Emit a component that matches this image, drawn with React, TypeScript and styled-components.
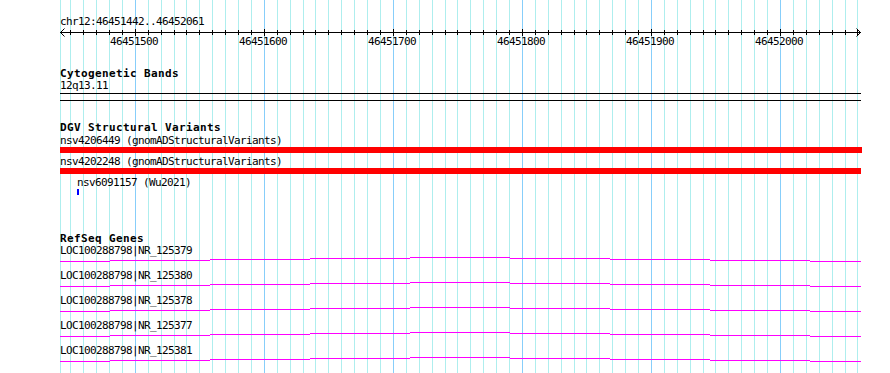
import React from 'react'
import styled, { createGlobalStyle } from 'styled-components'

// region shown in the panel
const START = 46451442
const END = 46452061
const LEFT = 60
const WIDTH = 800
const PX_PER_BP = WIDTH / (END - START + 1)

const toX = (bp: number) => Math.round(LEFT + (bp - START) * PX_PER_BP)

const gridPositions: { x: number; major: boolean; bp: number }[] = []
for (let bp = Math.ceil(START / 10) * 10; bp <= END; bp += 10) {
  gridPositions.push({ x: toX(bp), major: bp % 100 === 0, bp })
}

const variants = [
  { name: 'nsv4206449', source: 'gnomADStructuralVariants', offset: 0, width: 802, color: '#ff0000' },
  { name: 'nsv4202248', source: 'gnomADStructuralVariants', offset: 0, width: 801, color: '#ff0000' },
  { name: 'nsv6091157', source: 'Wu2021', offset: 17, width: 2, color: '#0000ff' },
]

const genes = ['NR_125379', 'NR_125380', 'NR_125378', 'NR_125377', 'NR_125381']

// stepped intron line: [x0, x1, y]
const geneSteps = [
  [0, 50, 5],
  [50, 150, 4],
  [150, 250, 3],
  [250, 350, 2],
  [350, 450, 1],
  [450, 550, 2],
  [550, 650, 3],
  [650, 750, 4],
  [750, 801, 5],
]

const GlobalStyle = createGlobalStyle`
  html, body {
    margin: 0;
    padding: 0;
    background: #ffffff;
  }
`

const Panel = styled.div`
  position: relative;
  width: 890px;
  height: 373px;
  overflow: hidden;
  background: #ffffff;
  color: #000000;
  font-family: 'DejaVu Sans Mono', 'Liberation Mono', monospace;
  font-size: 11px;
  line-height: 14px;
  letter-spacing: -0.62px;
  white-space: nowrap;
`

const GridLayer = styled.svg`
  position: absolute;
  top: 0;
  left: 0;
  z-index: 0;
`

const Content = styled.div`
  position: relative;
  z-index: 1;
  display: flex;
  flex-direction: column;
  padding: 15px 0 0 ${LEFT}px;
`

const Track = styled.section<{ $gap?: number; $height?: number }>`
  display: flex;
  flex-direction: column;
  margin-top: ${(p) => p.$gap || 0}px;
  ${(p) => (p.$height ? `height: ${p.$height}px;` : '')}
`

const TrackTitle = styled.div`
  font-weight: bold;
  letter-spacing: 0.38px;
  height: 12px;
`

const Label = styled.div`
  height: 12px;
`

const RulerSvg = styled.svg`
  display: block;
  overflow: visible;

  text {
    font-family: 'DejaVu Sans Mono', 'Liberation Mono', monospace;
    font-size: 11px;
    letter-spacing: -0.62px;
    fill: #000000;
  }
`

const Band = styled.div`
  width: 801px;
  height: 6px;
  margin-top: 2px;
  border-top: 1px solid #000000;
  border-bottom: 1px solid #000000;
`

const FeatureRow = styled.div<{ $indent: number }>`
  display: flex;
  flex-direction: column;
  padding: 1px 0 1px ${(p) => p.$indent}px;
`

const FeatureBar = styled.div<{ $color: string; $width: number }>`
  width: ${(p) => p.$width}px;
  height: 6px;
  margin-top: 1px;
  background: ${(p) => p.$color};
`

const GeneRow = styled.div`
  display: flex;
  flex-direction: column;
  height: 25px;
`

const GeneSvg = styled.svg`
  display: block;
`

const Grid = () => (
  <GridLayer width={890} height={373}>
    <rect x={LEFT} y={0} width={1} height={373} fill="#aeeeee" />
    {gridPositions.map((g) => (
      <rect
        key={g.bp}
        x={g.x}
        y={0}
        width={1}
        height={373}
        fill={g.major ? '#87cefa' : '#aeeeee'}
      />
    ))}
  </GridLayer>
)

const Ruler = () => (
  <RulerSvg width={801} height={23}>
    <rect x={0} y={5} width={801} height={1} fill="#000" />
    {gridPositions.map((g) => (
      <rect
        key={g.bp}
        x={g.x - LEFT}
        y={g.major ? 2 : 3}
        width={1}
        height={g.major ? 7 : 5}
        fill="#000"
      />
    ))}
    <polyline points="4.5,1.5 0.5,5.5 4.5,9.5" fill="none" stroke="#000" strokeWidth={1} />
    <polyline points="796.5,1.5 800.5,5.5 796.5,9.5" fill="none" stroke="#000" strokeWidth={1} />
    {gridPositions
      .filter((g) => g.major)
      .map((g) => (
        <text key={g.bp} x={g.x - LEFT - 25} y={18}>
          {g.bp}
        </text>
      ))}
  </RulerSvg>
)

const GeneLine = () => (
  <GeneSvg width={801} height={13}>
    {geneSteps.map(([x0, x1, y]) => (
      <rect key={x0} x={x0} y={y} width={x1 - x0} height={1} fill="#ff00ff" />
    ))}
  </GeneSvg>
)

export default function App() {
  return (
    <Panel>
      <GlobalStyle />
      <Grid />
      <Content>
        <Track $height={52}>
          <Label>
            chr12:{START}..{END}
          </Label>
          <Ruler />
        </Track>

        <Track>
          <TrackTitle>Cytogenetic Bands</TrackTitle>
          <Label>12q13.11</Label>
          <Band />
        </Track>

        <Track $gap={20}>
          <TrackTitle>DGV Structural Variants</TrackTitle>
          {variants.map((v) => (
            <FeatureRow key={v.name} $indent={v.offset}>
              <Label>
                {v.name} ({v.source})
              </Label>
              <FeatureBar $color={v.color} $width={v.width} />
            </FeatureRow>
          ))}
        </Track>

        <Track $gap={36}>
          <TrackTitle>RefSeq Genes</TrackTitle>
          {genes.map((g) => (
            <GeneRow key={g}>
              <Label>LOC100288798|{g}</Label>
              <GeneLine />
            </GeneRow>
          ))}
        </Track>
      </Content>
    </Panel>
  )
}
